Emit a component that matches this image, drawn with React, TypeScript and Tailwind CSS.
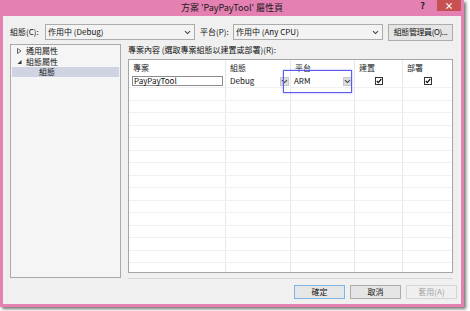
import React from 'react'

const FONT = { fontFamily: '"Noto Sans CJK TC", "Noto Sans", sans-serif' }

function Chevron({ className = '' }: { className?: string }) {
  return (
    <svg width="7" height="5" viewBox="0 0 7 5" className={className}>
      <path d="M1 1.2 L3.5 3.6 L6 1.2" fill="none" stroke="#404040" strokeWidth="1.1" />
    </svg>
  )
}

function Combo({ text, width }: { text: string; width: string }) {
  return (
    <div className={`${width} h-[16px] flex items-center justify-between border border-[#acacac] bg-[#f3f3f3] pl-[2px] pr-[3px]`}>
      <span className="text-[8px] leading-none text-[#111]">{text}</span>
      <Chevron />
    </div>
  )
}

function Btn({ label, kind = 'normal', className = '' }: { label: string; kind?: 'default' | 'normal' | 'disabled'; className?: string }) {
  const styles = {
    default: 'border-[#7fb4e6] bg-[#e6e6e6] text-[#111]',
    normal: 'border-[#acacac] bg-[#e5e5e5] text-[#111]',
    disabled: 'border-[#d5d5d5] bg-[#efefef] text-[#a3a3a3]',
  }[kind]
  return (
    <div className={`h-[14px] flex items-center justify-center border ${styles} ${className}`}>
      <span className="text-[8px] leading-none whitespace-nowrap">{label}</span>
    </div>
  )
}

function Check() {
  return (
    <svg width="8" height="8" viewBox="0 0 8 8">
      <rect x="0.5" y="0.5" width="7" height="7" fill="#fff" stroke="#333" />
      <path d="M1.8 4 L3.3 5.6 L6.3 2" fill="none" stroke="#111" strokeWidth="1.2" />
    </svg>
  )
}

function DropBtn() {
  return (
    <div className="w-[9px] h-[9px] flex items-center justify-center bg-[#dedede] border border-[#c8c8c8]">
      <Chevron />
    </div>
  )
}

const COLS = 'grid grid-cols-[97px_65px_64px_48px_1fr]'
const CELL = 'border-r border-[#e3e9ef] last:border-r-0'

export default function App() {
  return (
    <div className="w-[470px] h-[311px] bg-white relative" style={FONT}>
      <div className="w-[464px] h-[307px] bg-[#e480b2] flex flex-col px-[3px] pb-[3px] shadow-[2px_2px_3px_rgba(0,0,0,0.55)] relative">
        {/* title bar */}
        <div className="h-[16px] relative flex items-center justify-center">
          <span className="text-[9px] leading-none text-[#1a1a1a] pb-[1px]">方案 'PayPayTool' 屬性頁</span>
          <span className="absolute right-[36px] top-[1px] text-[9px] font-bold leading-none text-[#222]">?</span>
          <div className="absolute right-[0px] top-0 w-[24px] h-[11px] bg-[#c75050] flex items-center justify-center">
            <span className="text-white text-[9px] font-bold leading-none">×</span>
          </div>
        </div>

        {/* client area */}
        <div className="flex-1 bg-[#f0f0f0] flex flex-col pt-[8px] pl-[7px] pr-[8px]">
          <div className="flex items-center h-[16px]">
            <span className="w-[35px] text-[8px] leading-none text-[#111]">組態(C):</span>
            <Combo text="作用中 (Debug)" width="w-[150px]" />
            <span className="ml-[5px] w-[33px] text-[8px] leading-none text-[#111]">平台(P):</span>
            <Combo text="作用中 (Any CPU)" width="w-[150px]" />
            <div className="ml-[5px] w-[65px] h-[17px] flex items-center justify-center border border-[#acacac] bg-[#e5e5e5]">
              <span className="text-[8px] leading-none whitespace-nowrap tracking-[-0.4px] text-[#111]">組態管理員(O)...</span>
            </div>
          </div>

          <div className="flex mt-[4px] h-[235px]">
            {/* tree */}
            <div className="w-[111px] h-[234px] border border-[#a9a9a9] bg-[#f5f5f5] pt-[1px]">
              <div className="h-[10px] flex items-center pl-[6px]">
                <svg width="5" height="6" viewBox="0 0 5 6"><path d="M0.5 0.5 L4 3 L0.5 5.5 Z" fill="none" stroke="#555" strokeWidth="0.9" /></svg>
                <span className="ml-[4px] text-[8px] leading-none text-[#111]">通用屬性</span>
              </div>
              <div className="h-[11px] flex items-center pl-[6px]">
                <svg width="5" height="6" viewBox="0 0 5 6"><path d="M4.5 1 L4.5 5 L0.5 5 Z" fill="#333" /></svg>
                <span className="ml-[4px] text-[8px] leading-none text-[#111]">組態屬性</span>
              </div>
              <div className="h-[10px] flex items-center bg-[#cfd3e2] mx-[1px]">
                <span className="ml-[27px] text-[8px] leading-none text-[#111]">組態</span>
              </div>
            </div>

            {/* right side */}
            <div className="ml-[7px] w-[325px] flex flex-col">
              <div className="h-[11px] flex items-center">
                <span className="text-[8px] leading-none text-[#111]">專案內容 (選取專案組態以建置或部署)(R):</span>
              </div>
              <div className="mt-[4px] h-[214px] border border-[#a5a5a5] bg-white overflow-hidden">
                <div className={`${COLS} h-[15px]`}>
                  {['專案', '組態', '平台', '建置', '部署'].map((h) => (
                    <div key={h} className={`${CELL} flex items-center pl-[4px]`}>
                      <span className="text-[8px] leading-none text-[#222]">{h}</span>
                    </div>
                  ))}
                </div>
                <div className={`${COLS} h-[13px] border-b border-[#f0f0f0]`}>
                  <div className={`${CELL} flex items-center pl-[3px] pr-[2px]`}>
                    <div className="w-full h-[10px] border border-[#8d8d8d] flex items-center pl-[1px]">
                      <span className="text-[8px] leading-none text-[#111]">PayPayTool</span>
                    </div>
                  </div>
                  <div className={`${CELL} flex items-center justify-between pl-[4px] pr-[1px]`}>
                    <span className="text-[8px] leading-none text-[#111]">Debug</span>
                    <DropBtn />
                  </div>
                  <div className={`${CELL} flex items-center justify-between pl-[3px] pr-[2px]`}>
                    <span className="text-[8px] leading-none text-[#111]">ARM</span>
                    <DropBtn />
                  </div>
                  <div className={`${CELL} flex items-center justify-center`}>
                    <Check />
                  </div>
                  <div className={`${CELL} flex items-center justify-center`}>
                    <Check />
                  </div>
                </div>
                {Array.from({ length: 16 }).map((_, i) => (
                  <div key={i} className={`${COLS} h-[12.5px] border-b border-[#f0f0f0]`}>
                    <div className={CELL} />
                    <div className={CELL} />
                    <div className={CELL} />
                    <div className={CELL} />
                    <div className={CELL} />
                  </div>
                ))}
              </div>
              <div className="mt-[5px] h-[1px] bg-[#d6d6d6]" />
            </div>
          </div>

          <div className="flex justify-end mt-[6px] -mr-[4px] gap-[5px]">
            <Btn label="確定" kind="default" className="w-[51px]" />
            <Btn label="取消" className="w-[51px]" />
            <Btn label="套用(A)" kind="disabled" className="w-[51px]" />
          </div>
        </div>

        {/* annotation box drawn over the platform cell */}
        <div className="absolute left-[283px] top-[70px] w-[69px] h-[23px] border border-[#5b5bf0] shadow-[0_0_2px_rgba(80,80,240,0.5)]" />
      </div>
    </div>
  )
}
